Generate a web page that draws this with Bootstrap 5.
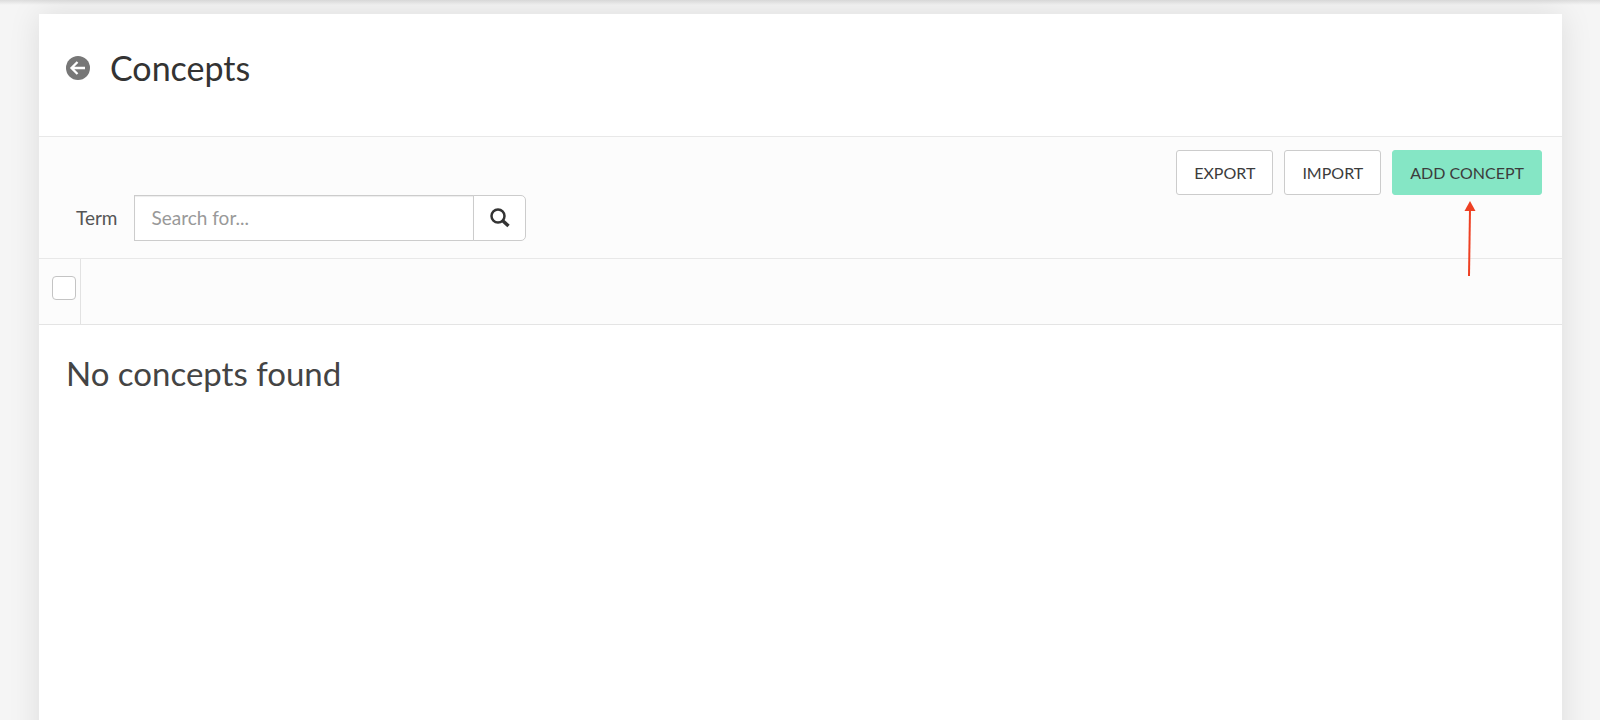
<!DOCTYPE html>
<html lang="en">
<head>
<meta charset="utf-8">
<meta name="viewport" content="width=device-width, initial-scale=1">
<title>Concepts</title>
<link href="https://cdn.jsdelivr.net/npm/bootstrap@5.3.0/dist/css/bootstrap.min.css" rel="stylesheet">
<style>
body { font-family: Lato, "Liberation Sans", sans-serif; background: #f5f5f5; color: #444; }
.page-wrap { padding: 14px 38px 0 39px; background: linear-gradient(#dcdcdc, #f5f5f5 5px); }
.panel { background: #fff; box-shadow: 0 0 30px rgba(0,0,0,.1); }
.panel-head { padding: 31px 27px 0; height: 122px; gap: 20px; }
.panel-head h1 { font-size: 34px; line-height: 46px; color: #333; font-weight: 400; }
.back-link { display: flex; height: 46px; align-items: center; }
.tools { background: #fcfcfc; border-top: 1px solid #e8e8e8; padding: 13px 20px 17px 37px; }
.actions { gap: 11px; }
.btn-tool { --bs-btn-padding-x: 17px; --bs-btn-padding-y: 0; --bs-btn-font-size: 16px; --bs-btn-line-height: 43px; --bs-btn-border-radius: 3px; --bs-btn-color: #3c3c3c; --bs-btn-bg: #fff; --bs-btn-border-color: #ccc; --bs-btn-hover-bg: #f3f3f3; }
.btn-main { --bs-btn-bg: #85e6c5; --bs-btn-border-color: #85e6c5; --bs-btn-hover-bg: #70dab5; }
.term-label { font-size: 19px; color: #555; margin-right: 17px; }
.search-group { width: 392px; }
.search-group .form-control { font-size: 19px; height: 46px; padding: 0 16px 2px; border-color: #ccc; border-radius: 0; color: #444; box-shadow: inset 0 1px 1px rgba(0,0,0,.075); }
.search-group .form-control::placeholder { color: #999; }
.search-group .btn { width: 53px; height: 46px; padding: 0 0 4px; background: #fff; border: 1px solid #ccc; border-radius: 0 5px 5px 0; }
.select-row { background: #fcfcfc; border-top: 1px solid #e8e8e8; border-bottom: 1px solid #e4e4e4; height: 67px; }
.select-cell { width: 42px; padding: 17px 0 0 13px; border-right: 1px solid #e2e2e2; }
.select-cell .form-check-input { width: 24px; height: 24px; margin: 0; border: 1px solid #c4c4c4; border-radius: 4px; }
.results { padding: 23px 27px; min-height: 100vh; }
.results h2 { font-size: 33px; line-height: 50px; color: #444; font-weight: 400; }
.pointer { position: absolute; top: 50px; left: 48%; pointer-events: none; }
</style>
</head>
<body>
<div class="page-wrap vh-100 overflow-hidden">
  <main class="panel">
    <header class="panel-head d-flex align-items-start">
      <a class="back-link" href="#" aria-label="Back">
        <svg width="24" height="24" viewBox="0 0 24 24" fill="none"><circle cx="12" cy="12" r="12" fill="#777"/><path d="M19 12H6M11.500 6L5.500 12l6 6" stroke="#fff" stroke-width="2.300"/></svg>
      </a>
      <h1 class="m-0">Concepts</h1>
    </header>
    <section class="tools">
      <div class="actions d-flex justify-content-end">
        <button type="button" class="btn btn-tool">EXPORT</button>
        <button type="button" class="btn btn-tool">IMPORT</button>
        <div class="position-relative">
          <button type="button" class="btn btn-tool btn-main">ADD CONCEPT</button>
          <svg class="pointer" width="12" height="76" viewBox="0 0 12 76" fill="none"><path d="M6 9L5 76" stroke="#ee4023" stroke-width="2"/><path d="M6 1L11.500 11H.5z" fill="#ee4023"/></svg>
        </div>
      </div>
      <form class="d-flex align-items-center">
        <label class="term-label" for="term">Term</label>
        <div class="input-group search-group">
          <input type="text" class="form-control" id="term" placeholder="Search for...">
          <button type="button" class="btn" aria-label="Search">
            <svg width="20" height="20" viewBox="0 0 20 20" fill="none" stroke="#333"><circle cx="8" cy="8" r="6.500" stroke-width="2.500"/><path d="M12.500 12.500L18.500 18" stroke-width="3.500"/></svg>
          </button>
        </div>
      </form>
    </section>
    <div class="select-row d-flex">
      <div class="select-cell"><input class="form-check-input d-block" type="checkbox" aria-label="Select all"></div>
    </div>
    <section class="results"><h2 class="m-0">No concepts found</h2></section>
  </main>
</div>
<script src="https://cdn.jsdelivr.net/npm/bootstrap@5.3.0/dist/js/bootstrap.bundle.min.js"></script>
</body>
</html>
